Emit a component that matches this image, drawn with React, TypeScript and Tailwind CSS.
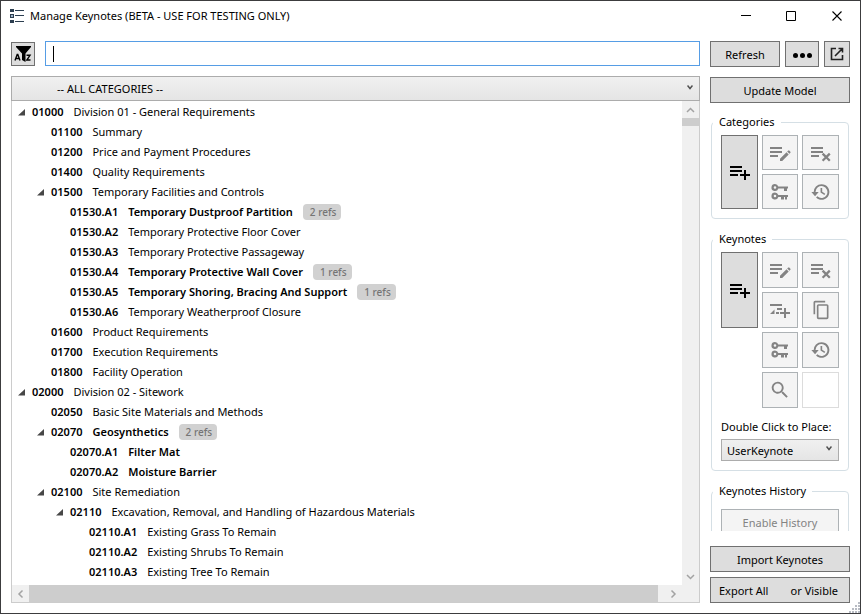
import type { ReactNode } from "react";

type Row = { level: number; id: string; name: string; open?: boolean; used?: boolean; refs?: number };

const rows: Row[] = [
  { level: 0, id: "01000", name: "Division 01 - General Requirements", open: true },
  { level: 1, id: "01100", name: "Summary" },
  { level: 1, id: "01200", name: "Price and Payment Procedures" },
  { level: 1, id: "01400", name: "Quality Requirements" },
  { level: 1, id: "01500", name: "Temporary Facilities and Controls", open: true },
  { level: 2, id: "01530.A1", name: "Temporary Dustproof Partition", used: true, refs: 2 },
  { level: 2, id: "01530.A2", name: "Temporary Protective Floor Cover" },
  { level: 2, id: "01530.A3", name: "Temporary Protective Passageway" },
  { level: 2, id: "01530.A4", name: "Temporary Protective Wall Cover", used: true, refs: 1 },
  { level: 2, id: "01530.A5", name: "Temporary Shoring, Bracing And Support", used: true, refs: 1 },
  { level: 2, id: "01530.A6", name: "Temporary Weatherproof Closure" },
  { level: 1, id: "01600", name: "Product Requirements" },
  { level: 1, id: "01700", name: "Execution Requirements" },
  { level: 1, id: "01800", name: "Facility Operation" },
  { level: 0, id: "02000", name: "Division 02 - Sitework", open: true },
  { level: 1, id: "02050", name: "Basic Site Materials and Methods" },
  { level: 1, id: "02070", name: "Geosynthetics", open: true, used: true, refs: 2 },
  { level: 2, id: "02070.A1", name: "Filter Mat", used: true },
  { level: 2, id: "02070.A2", name: "Moisture Barrier", used: true },
  { level: 1, id: "02100", name: "Site Remediation", open: true },
  { level: 2, id: "02110", name: "Excavation, Removal, and Handling of Hazardous Materials", open: true },
  { level: 3, id: "02110.A1", name: "Existing Grass To Remain" },
  { level: 3, id: "02110.A2", name: "Existing Shrubs To Remain" },
  { level: 3, id: "02110.A3", name: "Existing Tree To Remain" },
];

const indents = ["pl-[6px]", "pl-[25px]", "pl-[44px]", "pl-[63px]"];

const buttonLook = "flex items-center justify-center border border-[#707070] bg-[#dddddd] text-black";
const toolLook = "flex items-center justify-center border border-[#adb2b5] bg-[#f4f4f4] text-[#838383]";

function Icon({ children, size = "size-6" }: { children: ReactNode; size?: string }) {
  return (
    <svg viewBox="0 0 24 24" className={size} fill="currentColor" aria-hidden="true">
      {children}
    </svg>
  );
}

const AddIcon = () => (
  <Icon>
    <path d="M3 6h12v2H3zM3 10h12v2H3zM3 14h8v2H3zM17 10h2v4h4v2h-4v4h-2v-4h-4v-2h4z" />
  </Icon>
);
const EditIcon = () => (
  <Icon>
    <path d="M2 6h12v2H2zM2 10h12v2H2zM2 14h8v2H2zM12 17.800l6.500-6.500 2.200 2.200-6.500 6.500H12zM19.200 10.600l1-1q.5-.4 1 0l1.200 1.200q.4.500 0 1l-1 1z" />
  </Icon>
);
const RemoveIcon = () => (
  <Icon>
    <path d="M2 6h12v2H2zM2 10h12v2H2zM2 14h8v2H2zM14.400 11.800l2.800 2.800L20 11.800l1.600 1.600-2.800 2.800 2.800 2.800-1.600 1.600-2.800-2.800-2.800 2.800-1.600-1.600 2.800-2.800-2.800-2.800z" />
  </Icon>
);
const AddChildIcon = () => (
  <Icon>
    <path d="M2 6h12v2H2zM9 10h5v2H9zM2 16l4.500-4.500V16zM8 14h3v2H8zM12 14h4v-4h2v4h4v2h-4v4h-2v-4h-4z" />
  </Icon>
);
const KeysIcon = () => (
  <Icon>
    <path
      fillRule="evenodd"
      d="M7 4a3.500 3.500 0 0 1 3.300 2.500H20v2h-1V11h-3V8.500h-5.700A3.500 3.500 0 1 1 7 4zm0 2.200a1.300 1.300 0 1 0 0 2.600 1.300 1.300 0 0 0 0-2.600z"
    />
    <path
      fillRule="evenodd"
      d="M7 12.500a3.500 3.500 0 0 1 3.300 2.500H20v2h-1v2.500h-2V17h-1v2.500h-3V17h-2.700A3.500 3.500 0 1 1 7 12.500zm0 2.200a1.300 1.300 0 1 0 0 2.600 1.300 1.300 0 0 0 0-2.600z"
    />
  </Icon>
);
const HistoryIcon = () => (
  <Icon size="size-[22px]">
    <path d="M12.500 3.500a8.500 8.500 0 0 0-8.500 8.500H1.500l4 4.500 4-4.500H6a6.500 6.500 0 1 1 2 4.700L6.600 18A8.500 8.500 0 1 0 12.500 3.500zM11.500 7.500v5l4.200 2.700.9-1.300-3.300-2.100V7.500z" />
  </Icon>
);
const CopyIcon = () => (
  <Icon size="size-5">
    <path d="M17 1H5a2 2 0 0 0-2 2v14h2V3h12zM19 21H9V7h10zm0-16H9a2 2 0 0 0-2 2v14a2 2 0 0 0 2 2h10a2 2 0 0 0 2-2V7a2 2 0 0 0-2-2z" />
  </Icon>
);
const SearchIcon = () => (
  <Icon size="size-[22px]">
    <path d="M9.500 3a6.500 6.500 0 0 1 4.900 10.700l.3.300h.8l5 5-1.500 1.500-5-5v-.8l-.3-.3A6.500 6.500 0 1 1 9.500 3zm0 2a4.500 4.500 0 1 0 0 9 4.500 4.500 0 0 0 0-9z" />
  </Icon>
);

function Chevron({ turn = "", size = "h-1.5 w-[9px]" }: { turn?: string; size?: string }) {
  return (
    <svg viewBox="0 0 9 6" className={`${size} ${turn}`} fill="none" stroke="currentColor" strokeWidth="1.5" aria-hidden="true">
      <path d="M1 1l3.500 3.500L8 1" />
    </svg>
  );
}

function SmallChevron() {
  return (
    <svg viewBox="0 0 6 5" className="h-[5px] w-1.5" fill="none" stroke="#505050" strokeWidth="1.5" aria-hidden="true">
      <path d="M.5.5L3 3.500 5.500.5" />
    </svg>
  );
}

function Tool({ label, children }: { label: string; children: ReactNode }) {
  return (
    <button type="button" aria-label={label} className={toolLook} disabled>
      {children}
    </button>
  );
}

function Group({ title, children }: { title: string; children: ReactNode }) {
  return (
    <fieldset className="mx-px mb-3 rounded-[4px] border border-[#d5dfe5] px-[9px] pb-[9px]">
      <legend className="-ml-2 px-1.5 leading-4">{title}</legend>
      {children}
    </fieldset>
  );
}

function TreeRow({ row }: { row: Row }) {
  return (
    <li className={`flex h-5 items-center whitespace-nowrap ${indents[row.level]}`}>
      <span className="w-3.5 shrink-0">
        {row.open && (
          <svg viewBox="0 0 7 7" className="size-[7px]" aria-hidden="true">
            <path d="M7 0v6.500H0z" fill="#474747" />
          </svg>
        )}
      </span>
      <span className="font-semibold">{row.id}</span>
      <span className={row.used ? "ml-2.5 font-semibold" : "ml-2.5"}>{row.name}</span>
      {row.refs && (
        <span className="ml-2.5 rounded-[4px] bg-[#d1d1d1] pr-[5px] pl-[7px] text-[10px] leading-4 font-medium text-[#757575]">
          {row.refs} refs
        </span>
      )}
    </li>
  );
}

function TitleBar() {
  return (
    <header className="flex h-[30px] shrink-0 items-center pl-[9px]">
      <svg viewBox="0 0 14 14" className="h-3.5 w-3.5" aria-hidden="true">
        <path d="M0 0h4v3H0zM0 5h4v4H0zM0 11h4v3H0z" fill="#2c3e50" />
        <path d="M1 6h2v2H1z" fill="#9fb4c8" />
        <path d="M5 1h9v1H5zM5 6h9v1H5zM5 12h9v1H5z" fill="#2c3e50" />
      </svg>
      <h1 className="ml-1.5 flex-1 leading-4">Manage Keynotes (BETA - USE FOR TESTING ONLY)</h1>
      <button type="button" aria-label="Minimize" className="flex w-[46px] justify-center">
        <svg viewBox="0 0 11 11" className="size-[11px]" fill="none" stroke="#000">
          <path d="M1 4.500h10" />
        </svg>
      </button>
      <button type="button" aria-label="Maximize" className="flex w-[46px] justify-center">
        <svg viewBox="0 0 11 11" className="size-[11px]" fill="none" stroke="#000">
          <path d="M.5.5h9v9h-9z" />
        </svg>
      </button>
      <button type="button" aria-label="Close" className="flex w-[46px] justify-center">
        <svg viewBox="0 0 11 11" className="size-[11px]" fill="none" stroke="#000" strokeWidth="1.100">
          <path d="M.5.5l9 9M9.500.5l-9 9" />
        </svg>
      </button>
    </header>
  );
}

export default function App() {
  return (
    <div className="relative flex h-screen flex-col border border-[#3c3c3e] bg-white font-['Noto_Sans','Open_Sans',sans-serif] text-[11px] leading-4 text-black">
      <TitleBar />
      <div className="flex min-h-0 flex-1 gap-2.5 px-2.5 pt-2.5 pb-2.5">
        <main className="flex min-w-0 flex-1 flex-col">
          <div className="flex items-center gap-2.5">
            <button type="button" aria-label="Filter" className={`size-6 ${buttonLook}`}>
              <svg viewBox="0 0 18 18" className="size-[18px]" aria-hidden="true">
                <path d="M2 1h15v1l-5.500 6.500V17L8 15V8.500L2 2z" />
                <path d="M1 15.500L3.200 9.500h.6L6 15.500M2 13.500h3M12.500 10.300h3.500l-3.200 4.700h3.700" fill="none" stroke="#000" strokeWidth="1.400" />
              </svg>
            </button>
            <label className="relative flex flex-1">
              <input
                type="text"
                aria-label="Search keynotes"
                className="h-[25px] w-full border border-[#569de5] bg-white px-2 caret-transparent outline-none"
              />
              <span className="absolute top-[5px] left-2 h-4 w-px bg-black" />
            </label>
          </div>
          <div className="relative mt-2.5 flex">
            <select
              aria-label="Category"
              className="h-[25px] w-full appearance-none border border-[#acacac] bg-linear-to-b from-[#f0f0f0] to-[#e5e5e5] pt-px pl-[45px]"
            >
              <option>-- ALL CATEGORIES --</option>
            </select>
            <span className="pointer-events-none absolute top-[9px] right-[7px]">
              <SmallChevron />
            </span>
          </div>
          <div className="flex min-h-0 flex-1 flex-col border border-t-0 border-[#cccccc]">
            <div className="flex min-h-0 flex-1">
              <ul className="min-w-0 flex-1 overflow-hidden pt-px">
                {rows.map((row) => (
                  <TreeRow key={row.id} row={row} />
                ))}
              </ul>
              <div className="flex w-[17px] flex-col items-center bg-[#f0f0f0] text-[#a3a3a3]">
                <span className="flex h-[17px] items-center">
                  <Chevron turn="rotate-180" />
                </span>
                <span className="h-2 w-full bg-[#cdcdcd]" />
                <span className="mt-auto flex h-[17px] items-center">
                  <Chevron />
                </span>
              </div>
            </div>
            <div className="flex h-[17px] shrink-0 items-center bg-[#f0f0f0] pr-[17px] text-[#a3a3a3]">
              <span className="flex w-[17px] justify-center">
                <Chevron turn="rotate-90" />
              </span>
              <span className="mr-[7px] h-full flex-1 bg-[#cdcdcd]" />
              <span className="flex w-[17px] justify-center">
                <Chevron turn="-rotate-90" />
              </span>
            </div>
          </div>
        </main>

        <aside className="flex w-[140px] shrink-0 flex-col">
          <div className="flex gap-[5px]">
            <button type="button" className={`h-[26px] flex-1 pt-0.5 ${buttonLook}`}>
              Refresh
            </button>
            <button type="button" aria-label="More" className={`h-[26px] w-[34px] gap-0.5 pt-0.5 ${buttonLook}`}>
              <span className="size-[5px] rounded-full bg-black" />
              <span className="size-[5px] rounded-full bg-black" />
              <span className="size-[5px] rounded-full bg-black" />
            </button>
            <button type="button" aria-label="Open externally" className={`h-[26px] w-[26px] ${buttonLook}`}>
              <svg viewBox="0 0 14 14" className="size-3.5" fill="none" stroke="#222" strokeWidth="1.600" aria-hidden="true">
                <path d="M6 1.500H1.500v11h11V8M5 9l7.500-7.500M8.500 1.500h4v4" />
              </svg>
            </button>
          </div>
          <button type="button" className={`mt-2.5 h-[26px] shrink-0 pt-0.5 ${buttonLook}`}>
            Update Model
          </button>

          <div className="mt-[11px] min-h-0 flex-1 overflow-hidden">
            <Group title="Categories">
              <div className="mt-[5px] grid auto-rows-[35px] grid-cols-3 gap-1">
                <button type="button" aria-label="Add category" className={`row-span-2 ${buttonLook}`}>
                  <AddIcon />
                </button>
                <Tool label="Edit category"><EditIcon /></Tool>
                <Tool label="Remove category"><RemoveIcon /></Tool>
                <Tool label="Rekey category"><KeysIcon /></Tool>
                <Tool label="Category history"><HistoryIcon /></Tool>
              </div>
            </Group>
            <Group title="Keynotes">
              <div className="mt-[5px] grid auto-rows-[36px] grid-cols-3 gap-1">
                <button type="button" aria-label="Add keynote" className={`row-span-2 ${buttonLook}`}>
                  <AddIcon />
                </button>
                <Tool label="Edit keynote"><EditIcon /></Tool>
                <Tool label="Remove keynote"><RemoveIcon /></Tool>
                <Tool label="Add child keynote"><AddChildIcon /></Tool>
                <Tool label="Duplicate keynote"><CopyIcon /></Tool>
                <span className="row-span-2" />
                <Tool label="Rekey keynote"><KeysIcon /></Tool>
                <Tool label="Keynote history"><HistoryIcon /></Tool>
                <Tool label="Find keynote"><SearchIcon /></Tool>
                <span className="border border-[#dcdcdc] bg-white" />
              </div>
              <label htmlFor="place" className="mt-[11px] block whitespace-nowrap">
                Double Click to Place:
              </label>
              <div className="relative mt-1 flex">
                <select
                  id="place"
                  className="h-[22px] w-full appearance-none border border-[#acacac] bg-linear-to-b from-[#f0f0f0] to-[#e5e5e5] pt-px pl-[5px]"
                >
                  <option>UserKeynote</option>
                </select>
                <span className="pointer-events-none absolute top-[7px] right-[7px]">
                  <SmallChevron />
                </span>
              </div>
            </Group>
            <Group title="Keynotes History">
              <button type="button" className={`mt-2.5 h-[26px] w-full pt-0.5 ${toolLook}`} disabled>
                Enable History
              </button>
            </Group>
          </div>

          <button type="button" className={`mt-[15px] h-[26px] shrink-0 pt-0.5 ${buttonLook}`}>
            Import Keynotes
          </button>
          <div className="mt-[5px] flex h-[26px] shrink-0 justify-between border border-[#707070] bg-[#dddddd]">
            <button type="button" className="pt-0.5 pl-2">Export All</button>
            <button type="button" className="pt-0.5 pr-[11px]">or Visible</button>
          </div>
        </aside>
      </div>
      <svg viewBox="0 0 11 11" className="absolute right-0 bottom-0 size-[11px]" fill="#b8bcc4" aria-hidden="true">
        <path d="M9 0h2v2H9zM9 3h2v2H9zM9 6h2v2H9zM9 9h2v2H9zM6 3h2v2H6zM6 6h2v2H6zM6 9h2v2H6zM3 6h2v2H3zM3 9h2v2H3zM0 9h2v2H0z" />
      </svg>
    </div>
  );
}
